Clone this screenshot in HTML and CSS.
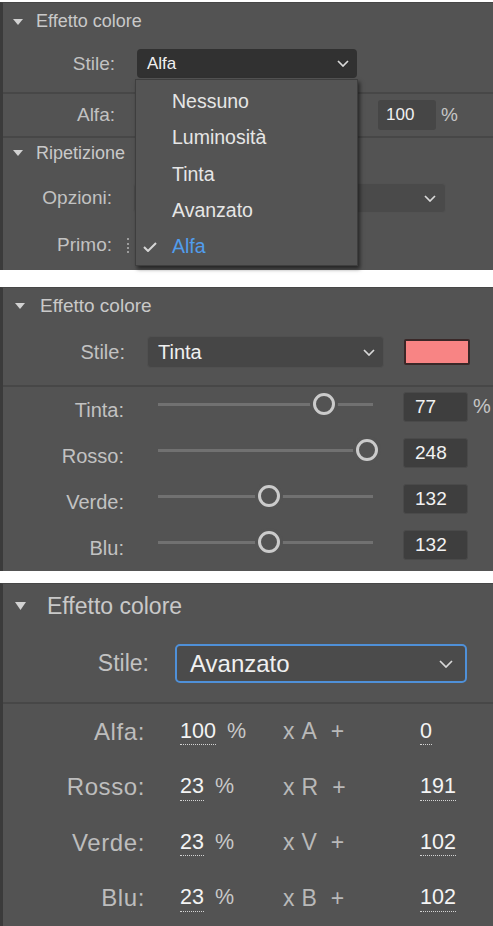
FILE: index.html
```html
<!DOCTYPE html>
<html lang="it">
<head>
<meta charset="utf-8">
<title>Effetto colore</title>
<link rel="stylesheet" href="styles.css">
</head>
<body>
<div class="page">

  <section class="panel p1">
    <div class="hdr"><svg class="tri" width="10" height="6" viewBox="0 0 10 6"><polygon points="0,0 10,0 5,6"/></svg><span>Effetto colore</span></div>
    <div class="row r1-stile sep">
      <span class="lbl l1">Stile:</span>
      <div class="dd dd1"><span>Alfa</span><svg class="chev" width="12" height="7" viewBox="0 0 12 7"><polyline points="1,1 6,6 11,1"/></svg></div>
    </div>
    <div class="row r1-alfa sep">
      <span class="lbl l1">Alfa:</span>
      <div class="num1">100</div><span class="pct1">%</span>
    </div>
    <div class="hdr hdr-sub"><svg class="tri" width="10" height="6" viewBox="0 0 10 6"><polygon points="0,0 10,0 5,6"/></svg><span>Ripetizione</span></div>
    <div class="row r1-opz">
      <span class="lbl l1b">Opzioni:</span>
      <div class="dd dd1b"><span></span><svg class="chev" width="12" height="7" viewBox="0 0 12 7"><polyline points="1,1 6,6 11,1"/></svg></div>
    </div>
    <div class="row r1-primo">
      <span class="lbl l1b">Primo:</span>
      <span class="dots"></span>
    </div>

    <ul class="menu">
      <li class="item"><span class="chk"></span>Nessuno</li>
      <li class="item"><span class="chk"></span>Luminosità</li>
      <li class="item"><span class="chk"></span>Tinta</li>
      <li class="item"><span class="chk"></span>Avanzato</li>
      <li class="item sel"><span class="chk"><svg width="14" height="10" viewBox="0 0 14 10"><polyline points="1,5 5,9 13,1"/></svg></span>Alfa</li>
    </ul>
  </section>

  <section class="panel p2">
    <div class="hdr"><svg class="tri" width="10" height="6" viewBox="0 0 10 6"><polygon points="0,0 10,0 5,6"/></svg><span>Effetto colore</span></div>
    <div class="row r2-stile sep">
      <span class="lbl l2s">Stile:</span>
      <div class="dd dd2"><span>Tinta</span><svg class="chev" width="12" height="7" viewBox="0 0 12 7"><polyline points="1,1 6,6 11,1"/></svg></div>
      <div class="swatch"></div>
    </div>
    <div class="row srow">
      <span class="lbl l2">Tinta:</span>
      <div class="slider"><div class="thumb" style="left:77%"></div></div>
      <div class="num2">77</div><span class="pct2">%</span>
    </div>
    <div class="row srow">
      <span class="lbl l2">Rosso:</span>
      <div class="slider"><div class="thumb" style="left:97.3%"></div></div>
      <div class="num2">248</div>
    </div>
    <div class="row srow">
      <span class="lbl l2">Verde:</span>
      <div class="slider"><div class="thumb" style="left:51.8%"></div></div>
      <div class="num2">132</div>
    </div>
    <div class="row srow">
      <span class="lbl l2">Blu:</span>
      <div class="slider"><div class="thumb" style="left:51.8%"></div></div>
      <div class="num2">132</div>
    </div>
  </section>

  <section class="panel p3">
    <div class="hdr"><svg class="tri" width="11" height="8" viewBox="0 0 11 8"><polygon points="0,0 11,0 5.5,8"/></svg><span>Effetto colore</span></div>
    <div class="row r3-stile sep">
      <span class="lbl l3s">Stile:</span>
      <div class="dd dd3"><span>Avanzato</span><svg class="chev" width="14" height="8" viewBox="0 0 14 8"><polyline points="1,1 7,7 13,1"/></svg></div>
    </div>
    <div class="row arow">
      <span class="lbl l3">Alfa:</span>
      <div class="v1"><span class="u">100</span><span class="pc">%</span></div>
      <div class="mul"><span>x</span><span class="ch">A</span><span class="pl">+</span></div>
      <div class="v2"><span class="u">0</span></div>
    </div>
    <div class="row arow">
      <span class="lbl l3">Rosso:</span>
      <div class="v1"><span class="u">23</span><span class="pc">%</span></div>
      <div class="mul"><span>x</span><span class="ch">R</span><span class="pl">+</span></div>
      <div class="v2"><span class="u">191</span></div>
    </div>
    <div class="row arow">
      <span class="lbl l3">Verde:</span>
      <div class="v1"><span class="u">23</span><span class="pc">%</span></div>
      <div class="mul"><span>x</span><span class="ch">V</span><span class="pl">+</span></div>
      <div class="v2"><span class="u">102</span></div>
    </div>
    <div class="row arow">
      <span class="lbl l3">Blu:</span>
      <div class="v1"><span class="u">23</span><span class="pc">%</span></div>
      <div class="mul"><span>x</span><span class="ch">B</span><span class="pl">+</span></div>
      <div class="v2"><span class="u">102</span></div>
    </div>
  </section>

</div>
</body>
</html>
```

FILE: styles.css
```css
* { box-sizing: border-box; }
body {
  margin: 0;
  background: #ffffff;
  font-family: "Liberation Sans", Arial, sans-serif;
}
.page {
  width: 493px;
  padding-top: 2px;
  display: flex;
  flex-direction: column;
}
.panel {
  position: relative;
  background: #535353;
  border-left: 3px solid #3b3b3b;
  border-top: 1px solid #474747;
  color: #c2c2c2;
  display: flex;
  flex-direction: column;
}
.p1 { height: 268px; }
.p2 { margin-top: 17px; height: 284px; }
.p3 { margin-top: 12px; height: 343px; }

/* headers */
.hdr {
  display: flex;
  align-items: center;
  color: #c9c9c9;
  flex-shrink: 0;
}
.tri { fill: #d2d2d2; flex-shrink: 0; }
.p1 .hdr { height: 37px; padding-left: 10px; gap: 13px; font-size: 18px; }
.p1 .hdr-sub { height: 30px; }
.p2 .hdr { height: 35px; padding-left: 12px; gap: 15px; font-size: 19px; }
.p3 .hdr { height: 44px; padding-left: 12px; gap: 21px; font-size: 23px; }

/* rows */
.row { display: flex; align-items: center; flex-shrink: 0; }
.sep { border-bottom: 2px solid #474747; }
.lbl { text-align: right; flex-shrink: 0; }

/* dropdowns */
.dd {
  display: flex;
  align-items: center;
  justify-content: space-between;
  border-radius: 4px;
  color: #f0f0f0;
  flex-shrink: 0;
}
.chev { fill: none; stroke: #d9d9d9; stroke-width: 1.7; flex-shrink: 0; }

/* ---------- panel 1 ---------- */
.r1-stile { height: 54px; padding-top: 9px; padding-bottom: 14px; }
.l1 { width: 112px; font-size: 19px; }
.dd1 {
  margin-left: 22px;
  width: 220px;
  height: 29px;
  background: #313131;
  padding: 0 8px 0 10px;
  font-size: 17px;
}
.r1-alfa { height: 44px; }
.num1 {
  margin-left: 263px;
  width: 58px;
  height: 30px;
  background: #464646;
  border-radius: 3px;
  color: #f0f0f0;
  font-size: 17px;
  line-height: 30px;
  padding-left: 8px;
}
.pct1 { margin-left: 5px; font-size: 19px; color: #c6c6c6; }
.r1-opz { height: 55px; padding-top: 15px; padding-bottom: 10px; }
.l1b { width: 109px; font-size: 19px; }
.dd1b {
  margin-left: 21px;
  width: 313px;
  height: 30px;
  background: #4a4a4a;
  border: 1px solid #525252;
  padding: 0 9px 0 10px;
}
.r1-primo { height: 44px; }
.dots {
  margin-left: 15px;
  width: 2px;
  height: 15px;
  border-left: 2px dotted #9c9c9c;
}

.menu {
  position: absolute;
  left: 132px;
  top: 76px;
  width: 223px;
  height: 187px;
  margin: 0;
  padding: 3px 0 0;
  list-style: none;
  background: #545454;
  border: 1px solid #3e3e3e;
  box-shadow: 2px 3px 4px rgba(0, 0, 0, 0.55);
  display: flex;
  flex-direction: column;
}
.item {
  height: 36.5px;
  display: flex;
  align-items: center;
  font-size: 19.5px;
  color: #e6e6e6;
}
.chk {
  width: 36px;
  padding-left: 7px;
  display: flex;
  align-items: center;
  flex-shrink: 0;
}
.chk svg { fill: none; stroke: #d6d6d6; stroke-width: 2; }
.item.sel { color: #519ded; }

/* ---------- panel 2 ---------- */
.r2-stile { height: 64px; padding-top: 13px; padding-bottom: 17px; }
.l2s { width: 122px; font-size: 20px; }
.dd2 {
  margin-left: 22px;
  width: 237px;
  height: 32px;
  background: #464646;
  border: 1px solid #505050;
  padding: 0 8px 0 10px;
  font-size: 20px;
}
.swatch {
  margin-left: 20px;
  width: 66px;
  height: 26px;
  background: #f88484;
  border: 2px solid #3a2828;
  border-radius: 2px;
}
.srow { height: 46px; }
.l2 { width: 121px; font-size: 20px; }
.slider {
  position: relative;
  margin-left: 34px;
  margin-bottom: 12px;
  width: 215px;
  height: 22px;
  background: linear-gradient(#717171, #717171) center / 100% 3px no-repeat;
}
.thumb {
  position: absolute;
  top: 0;
  width: 22px;
  height: 22px;
  margin-left: -11px;
  border-radius: 50%;
  border: 3px solid #cbcbcb;
  background: #535353;
  box-shadow: 0 0 0 3px #535353;
}
.num2 {
  margin-left: 30px;
  margin-bottom: 7px;
  width: 65px;
  height: 30px;
  background: #3e3e3e;
  border: 1px solid #4a4a4a;
  border-radius: 3px;
  color: #f2f2f2;
  font-size: 19px;
  line-height: 28px;
  padding-left: 11px;
}
.pct2 { margin-left: 5px; margin-bottom: 7px; font-size: 20px; color: #c6c6c6; }

/* ---------- panel 3 ---------- */
.r3-stile { height: 76px; padding-top: 16px; padding-bottom: 19px; }
.l3s { width: 146px; font-size: 23px; }
.dd3 {
  margin-left: 26px;
  width: 292px;
  height: 39px;
  background: #4b4b4b;
  border: 2px solid #4f90d8;
  border-radius: 5px;
  padding: 0 12px 0 13px;
  font-size: 24px;
}
.arow { height: 55.5px; }
.l3 { width: 142px; font-size: 24px; letter-spacing: 0.6px; color: #bdbdbd; }
.v1 {
  margin-left: 35px;
  width: 103px;
  display: flex;
  align-items: baseline;
  font-size: 21.5px;
  color: #f4f4f4;
}
.u {
  display: inline-block;
  line-height: 1;
  padding-bottom: 2px;
  border-bottom: 1px dotted #d4d4d4;
  color: #f4f4f4;
}
.pc { margin-left: 11px; color: #c8c8c8; }
.mul {
  width: 137px;
  display: flex;
  align-items: baseline;
  font-size: 23px;
  color: #b9b9b9;
}
.ch { margin-left: 7px; }
.pl { margin-left: 14px; }
.v2 { font-size: 21.5px; }
```
